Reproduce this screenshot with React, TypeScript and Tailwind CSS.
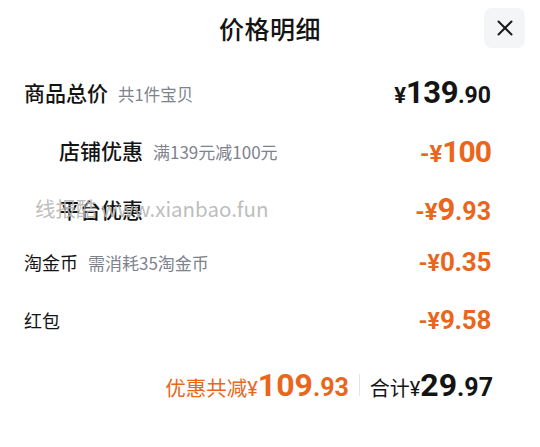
import React from 'react';
import { X } from 'lucide-react';

const cjk = "font-['Noto_Sans_CJK_SC',sans-serif]";
const num = "font-['Roboto','Noto_Sans_CJK_SC',sans-serif]";

interface Row {
  label: string;
  note?: string;
  big?: boolean;
  indent?: boolean;
  minus: string;
  cents?: string;
  h: string;
  size: string;
}

const rows: Row[] = [
  { label: '店铺优惠', note: '满139元减100元', big: true, indent: true, minus: '100', h: 'h-[58px]', size: 'text-[30px] tracking-[-1px]' },
  { label: '平台优惠', big: true, indent: true, minus: '9', cents: '.93', h: 'h-[60px]', size: 'text-[31px]' },
  { label: '淘金币', note: '需消耗35淘金币', minus: '0.35', h: 'h-[44px]', size: 'text-[26px]' },
  { label: '红包', minus: '9.58', h: 'h-[72px]', size: 'text-[26px]' },
];

export default function App() {
  return (
    <div className={`w-[540px] h-[447px] bg-white text-[#141414] relative overflow-hidden ${cjk}`}>
      {/* header */}
      <div className="h-[64px] relative flex justify-center">
        <h1 className="mt-[9px] text-[25px] font-medium leading-[38px] tracking-[0.5px]">价格明细</h1>
        <button className="absolute right-[15px] top-[8px] w-[41px] h-[40px] rounded-lg bg-[#f4f5f7] flex items-center justify-center">
          <X size={26} strokeWidth={1.8} className="text-[#1a1a1a]" />
        </button>
      </div>

      <div className="pl-6 pr-[49px]">
        <div className="h-[58px] flex items-center justify-between">
          <div className="flex items-baseline gap-[10px]">
            <span className="text-[21px] font-medium">商品总价</span>
            <span className="text-[16.5px] text-[#7d828c]">共1件宝贝</span>
          </div>
          <div className={`${num} font-bold flex items-baseline`}>
            <span className="text-[22px]">¥</span>
            <span className="text-[31px] tracking-[-0.5px]">139</span>
            <span className="text-[23px]">.90</span>
          </div>
        </div>

        {rows.map((r) => (
          <div key={r.label} className={`${r.h} flex items-center justify-between`}>
            <div className={`flex items-baseline gap-[10px] ${r.indent ? 'pl-[35px]' : ''}`}>
              <span className={r.big ? 'text-[21px] font-medium' : 'text-[18px]'}>{r.label}</span>
              {r.note && <span className="text-[17px] text-[#7d828c]">{r.note}</span>}
            </div>
            <div className={`${num} font-bold text-[#e9661c] flex items-baseline`}>
              <span className={r.big ? 'text-[24px]' : 'text-[23px]'}>-¥</span>
              <span className={`${r.size} tracking-[-0.3px]`}>{r.minus}</span>
              {r.cents && <span className="text-[25px]">{r.cents}</span>}
            </div>
          </div>
        ))}

        <div className="h-[58px] flex items-center justify-end -mr-[2px]">
          <div className="flex items-baseline text-[#e9661c]">
            <span className="text-[20.5px]">优惠共减</span>
            <span className={`${num} text-[20px]`}>¥</span>
            <span className={`${num} text-[32px] font-bold`}>109</span>
            <span className={`${num} text-[25px] font-bold`}>.93</span>
          </div>
          <div className="w-px h-[22px] bg-[#e3e4e7] mx-[10px]" />
          <div className="flex items-baseline">
            <span className="text-[20px]">合计</span>
            <span className={`${num} text-[20px]`}>¥</span>
            <span className={`${num} text-[32px] font-bold`}>29</span>
            <span className={`${num} text-[25px] font-bold`}>.97</span>
          </div>
        </div>
      </div>

      {/* watermark */}
      <div className="absolute left-[35px] top-[193px] text-[20.5px] text-[#b4b4b4]/90 font-['Noto_Sans_CJK_SC','Liberation_Sans',sans-serif] pointer-events-none">
        线报酷 www.xianbao.fun
      </div>
    </div>
  );
}
